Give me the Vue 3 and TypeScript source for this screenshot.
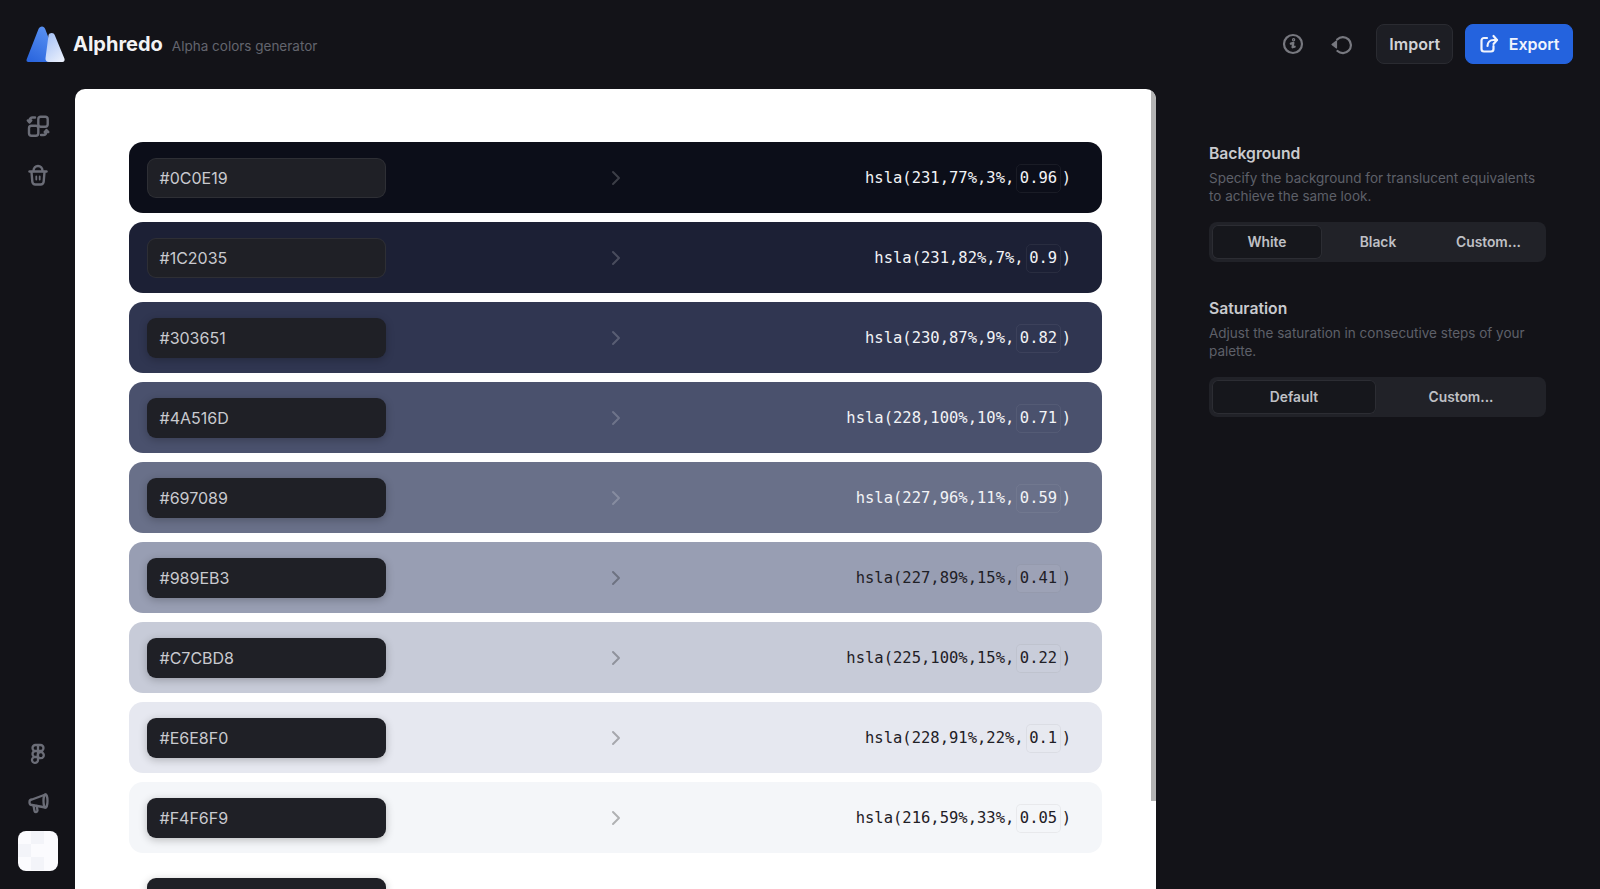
<script setup lang="ts">
interface Swatch {
  hex: string;
  hsl: string;
  alpha: string;
  dark: boolean;
}

const swatches: Swatch[] = [
  { hex: "#0C0E19", hsl: "231,77%,3%,", alpha: "0.96", dark: true },
  { hex: "#1C2035", hsl: "231,82%,7%,", alpha: "0.9", dark: true },
  { hex: "#303651", hsl: "230,87%,9%,", alpha: "0.82", dark: true },
  { hex: "#4A516D", hsl: "228,100%,10%,", alpha: "0.71", dark: true },
  { hex: "#697089", hsl: "227,96%,11%,", alpha: "0.59", dark: true },
  { hex: "#989EB3", hsl: "227,89%,15%,", alpha: "0.41", dark: false },
  { hex: "#C7CBD8", hsl: "225,100%,15%,", alpha: "0.22", dark: false },
  { hex: "#E6E8F0", hsl: "228,91%,22%,", alpha: "0.1", dark: false },
  { hex: "#F4F6F9", hsl: "216,59%,33%,", alpha: "0.05", dark: false },
  { hex: "#FFFFFF", hsl: "0,0%,100%,", alpha: "0", dark: false },
];
</script>

<template>
  <div class="app">
    <header class="topbar">
      <div class="brand">
        <svg class="logo" width="40" height="38" viewBox="0 0 40 38">
          <defs>
            <linearGradient id="lg1" x1="0.7" y1="0" x2="0.2" y2="1">
              <stop offset="0" stop-color="#5b93f3" />
              <stop offset="1" stop-color="#2b66de" />
            </linearGradient>
            <linearGradient id="lg2" x1="0.2" y1="0" x2="0.8" y2="1">
              <stop offset="0" stop-color="#a8c3f7" />
              <stop offset="1" stop-color="#e9effc" />
            </linearGradient>
          </defs>
          <path d="M16 1.500c1.500 0 2.600 1 3.200 2.600L31 35c.3 1.200-.3 2-1.500 2H2.500C.7 37 .1 35.700.7 34.200L12.500 4c.7-1.600 2-2.500 3.500-2.500z" fill="url(#lg1)" />
          <path d="M25.800 8c1.400 0 2.400.9 3 2.300l9.600 23.200c.7 1.800-.2 3.500-2 3.500H23c-2.300 0-3.800-1.500-3.500-3.700l3-23c.3-1.400 1.700-2.300 3.300-2.300z" fill="url(#lg2)" />
        </svg>
        <span class="title">Alphredo</span>
        <span class="tagline">Alpha colors generator</span>
      </div>
      <div class="actions">
        <button class="icon-btn" aria-label="Info">
          <svg width="22" height="22" viewBox="0 0 22 22" fill="none" stroke="#77787f" stroke-width="2.200" stroke-linecap="round" stroke-linejoin="round">
            <circle cx="11" cy="11" r="9" />
            <path d="M8.800 10.600l2.600-.7-.9 4.400 2.200-.6" />
            <circle cx="11.600" cy="6.800" r=".6" />
          </svg>
        </button>
        <button class="icon-btn" aria-label="Reset">
          <svg width="22" height="22" viewBox="0 0 22 22" fill="none" stroke="#77787f" stroke-width="2.200" stroke-linecap="round" stroke-linejoin="round">
            <path d="M7.200 6.500A8 8 0 1 1 7.500 18" />
            <path d="M2 11.500l4.500-3.500v7z" fill="#77787f" stroke-width="1.200" />
          </svg>
        </button>
        <button class="btn">Import</button>
        <button class="btn primary">
          <svg width="20" height="20" viewBox="0 0 20 20" fill="none" stroke="#f0f4fd" stroke-width="2.200" stroke-linecap="round" stroke-linejoin="round">
            <path d="M8 4H5a2.500 2.500 0 0 0-2.500 2.500V15A2.500 2.500 0 0 0 5 17.500h7a2.500 2.500 0 0 0 2.500-2.500v-3" />
            <path d="M8.500 12c0-3.500 2.500-6 6-6H18" />
            <path d="M14.500 2l3.500 4-3.500 4" />
          </svg>
          Export
        </button>
      </div>
    </header>

    <div class="body">
      <nav class="sidebar">
        <div class="side-group">
          <svg width="24" height="24" viewBox="0 0 24 24" fill="none" stroke="#6b6d77" stroke-width="2.400" stroke-linecap="round" stroke-linejoin="round">
            <rect x="12.300" y="2.700" width="9.400" height="10" rx="2.500" />
            <rect x="3" y="11.700" width="9.300" height="10" rx="2.500" />
            <path d="M9 3.500H6.500a3 3 0 0 0-3 3V8M1.800 6.500L3.500 8.500l1.800-2" />
            <path d="M15 21h2.500a3 3 0 0 0 3-3v-1.500M22.300 18L20.500 16l-1.800 2" />
          </svg>
          <svg width="24" height="24" viewBox="0 0 24 24" fill="none" stroke="#6b6d77" stroke-width="2.400" stroke-linecap="round" stroke-linejoin="round">
            <path d="M3.500 8.500h17" />
            <path d="M7.500 8c0-3 2-5 4.500-5s4.500 2 4.500 5" />
            <path d="M5.500 9l.8 9.500A3 3 0 0 0 9.300 21.500h5.400a3 3 0 0 0 3-3L18.500 9" />
            <path d="M10.300 13.500v3M13.700 13.500v3" stroke-width="1.800" />
          </svg>
        </div>
        <div class="side-group">
          <svg width="24" height="24" viewBox="0 0 24 24" fill="none" stroke="#6b6d77" stroke-width="2.300" stroke-linecap="round" stroke-linejoin="round">
            <path d="M12 3H9.500a3 3 0 0 0 0 6H12zM12 3h2.500a3 3 0 0 1 0 6H12zM12 9H9.500a3 3 0 0 0 0 6H12zM12 15H9.500a3 3 0 1 0 2.500 3zM17.500 12a3 3 0 1 1-5.500 0 3 3 0 0 1 5.500 0z" />
          </svg>
          <svg width="24" height="24" viewBox="0 0 24 24" fill="none" stroke="#6b6d77" stroke-width="2.300" stroke-linecap="round" stroke-linejoin="round">
            <path d="M19.500 3.500L6 8.500a2.500 2.500 0 0 0-2.500 2.500v.5A2.500 2.500 0 0 0 6 14l13.500 2.500" />
            <ellipse cx="19.500" cy="10" rx="2" ry="6.500" />
            <path d="M7.500 14.500l1 5.500c.3 1.500 3 1.300 3-.5l-.8-4.500" />
          </svg>
          <div class="palette-thumb">
            <span></span><span></span><span></span>
          </div>
        </div>
      </nav>

      <main class="panel">
        <div class="rows">
          <div
            v-for="s in swatches"
            :key="s.hex"
            class="row"
            :class="{ 'is-dark': s.dark }"
            :style="{ backgroundColor: s.hex }"
          >
            <div class="hex-input">{{ s.hex }}</div>
            <svg class="chevron" width="14" height="16" viewBox="0 0 14 16" fill="none" stroke-width="2" stroke-linecap="round" stroke-linejoin="round">
              <path d="M4 2l6 6-6 6" />
            </svg>
            <div class="value">
              <span>hsla({{ s.hsl }}</span>
              <span class="alpha">{{ s.alpha }}</span>
              <span class="close">)</span>
            </div>
          </div>
        </div>
        <div class="scrollbar"></div>
      </main>

      <aside class="settings">
        <section class="group">
          <h3>Background</h3>
          <p>Specify the background for translucent equivalents to achieve the same look.</p>
          <div class="segmented thirds">
            <button class="active">White</button>
            <button>Black</button>
            <button>Custom...</button>
          </div>
        </section>
        <section class="group">
          <h3>Saturation</h3>
          <p>Adjust the saturation in consecutive steps of your palette.</p>
          <div class="segmented halves">
            <button class="active">Default</button>
            <button>Custom...</button>
          </div>
        </section>
      </aside>
    </div>
  </div>
</template>

<style>
html,
body {
  margin: 0;
  background: #131318;
  overflow: hidden;
}
</style>

<style scoped>
.app {
  height: 889px;
  display: flex;
  flex-direction: column;
  background: #131318;
  font-family: Inter, "Liberation Sans", sans-serif;
  overflow: hidden;
}
button {
  font-family: inherit;
  border: 0;
  background: none;
  cursor: pointer;
}
.topbar {
  height: 89px;
  flex: none;
  display: flex;
  align-items: center;
  justify-content: space-between;
  padding: 0 27px 1px 26px;
  box-sizing: border-box;
}
.brand {
  display: flex;
  align-items: center;
}
.logo {
  margin-right: 7px;
}
.title {
  color: #f3f3f5;
  font-size: 20px;
  font-weight: 700;
  margin-right: 9px;
}
.tagline {
  color: #63656e;
  font-size: 13.500px;
  margin-top: 3px;
}
.actions {
  display: flex;
  align-items: center;
}
.icon-btn {
  width: 22px;
  height: 22px;
  padding: 0;
  margin-right: 27px;
  display: flex;
}
.icon-btn:first-child {
  margin-right: 26px;
}
.icon-btn + .btn {
  margin-left: -3px;
}
.btn {
  height: 40px;
  box-sizing: border-box;
  padding: 0 12px;
  border-radius: 8px;
  background: #1d1e24;
  border: 1px solid #2a2b31;
  color: #d2d3d7;
  font-size: 16px;
  font-weight: 600;
  display: flex;
  align-items: center;
  gap: 10px;
}
.btn.primary {
  margin-left: 12px;
  padding: 0 12.500px;
  background: #2463de;
  border-color: #2463de;
  color: #f0f4fd;
}
.body {
  flex: 1;
  display: flex;
  min-height: 0;
}
.sidebar {
  width: 75px;
  flex: none;
  display: flex;
  flex-direction: column;
  justify-content: space-between;
  align-items: center;
  padding: 25px 0 18px;
  box-sizing: border-box;
}
.side-group {
  display: flex;
  flex-direction: column;
  align-items: center;
  gap: 25px;
}
.palette-thumb {
  width: 40px;
  height: 40px;
  border-radius: 8px;
  background: #fbfbfe;
  position: relative;
  overflow: hidden;
  margin-top: -9px;
}
.palette-thumb span {
  position: absolute;
  width: 13px;
  height: 13px;
  background: #f3f4f9;
}
.palette-thumb span:nth-child(1) {
  left: 13px;
  top: 0;
}
.palette-thumb span:nth-child(2) {
  left: 0;
  top: 13px;
}
.palette-thumb span:nth-child(3) {
  left: 13px;
  top: 26px;
}
.panel {
  width: 1081px;
  flex: none;
  background: #fff;
  border-radius: 10px 10px 0 0;
  padding: 53px 54px 0;
  box-sizing: border-box;
  overflow: hidden;
  position: relative;
}
.rows {
  display: flex;
  flex-direction: column;
  gap: 9px;
}
.row {
  height: 71px;
  flex: none;
  border-radius: 14px;
  display: grid;
  grid-template-columns: 1fr auto 1fr;
  align-items: center;
  padding: 0 17.500px;
  color: #1f2026;
}
.row.is-dark {
  color: #f2f3f6;
}
.hex-input {
  width: 239px;
  height: 40px;
  box-sizing: border-box;
  border-radius: 9px;
  background: #1f2026;
  color: #c9cacf;
  font-size: 16px;
  display: flex;
  align-items: center;
  padding-left: 13px;
  box-shadow: 0 2px 8px rgba(0, 0, 0, 0.24);
}
.row:nth-child(-n + 2) .hex-input {
  border: 1px solid rgba(255, 255, 255, 0.07);
  padding-left: 12px;
  box-shadow: none;
}
.chevron {
  stroke: rgba(0, 0, 0, 0.28);
}
.row.is-dark .chevron {
  stroke: rgba(255, 255, 255, 0.2);
}
.value {
  display: flex;
  align-items: center;
  justify-content: flex-end;
  padding: 1px 13.500px 0 0;
  font-family: "DejaVu Sans Mono", "Liberation Mono", monospace;
  font-size: 15.500px;
}
.alpha {
  box-sizing: border-box;
  height: 29px;
  display: flex;
  align-items: center;
  padding: 0 2.500px;
  margin-left: 2px;
  border-radius: 5px;
  border: 1px solid rgba(0, 0, 0, 0.05);
  background: rgba(255, 255, 255, 0.05);
}
.row.is-dark .alpha {
  border-color: rgba(255, 255, 255, 0.06);
  background: none;
}
.row:last-child .alpha {
  border-color: transparent;
}
.close {
  margin-left: 1px;
}
.scrollbar {
  position: absolute;
  top: 0;
  right: 0;
  width: 5px;
  height: 712px;
  background: #b3b3b3;
}
.settings {
  flex: 1;
  padding: 53px 54px 0 53px;
  box-sizing: border-box;
}
.group + .group {
  margin-top: 37px;
}
.group h3 {
  margin: 2px 0 6px;
  font-size: 15.700px;
  line-height: 20px;
  font-weight: 600;
  color: #c9cace;
}
.group p {
  margin: 0 0 17px;
  font-size: 13.500px;
  line-height: 17.500px;
  color: #5e6069;
}
.segmented {
  height: 40px;
  box-sizing: border-box;
  padding: 3px;
  border-radius: 8px;
  background: #212228;
  display: grid;
}
.segmented.thirds {
  grid-template-columns: 110px 112px 1fr;
}
.segmented.halves {
  grid-template-columns: 164px 1fr;
  margin-top: 1px;
}
.segmented button {
  color: #bfc0c5;
  font-size: 13.800px;
  font-weight: 600;
  padding: 0 0 1px;
  border-radius: 6px;
}
.segmented.halves button:last-child {
  padding-left: 3px;
}
.segmented .active {
  background: #16171c;
  box-shadow: inset 0 0 0 1px #2c2d33;
}
</style>
